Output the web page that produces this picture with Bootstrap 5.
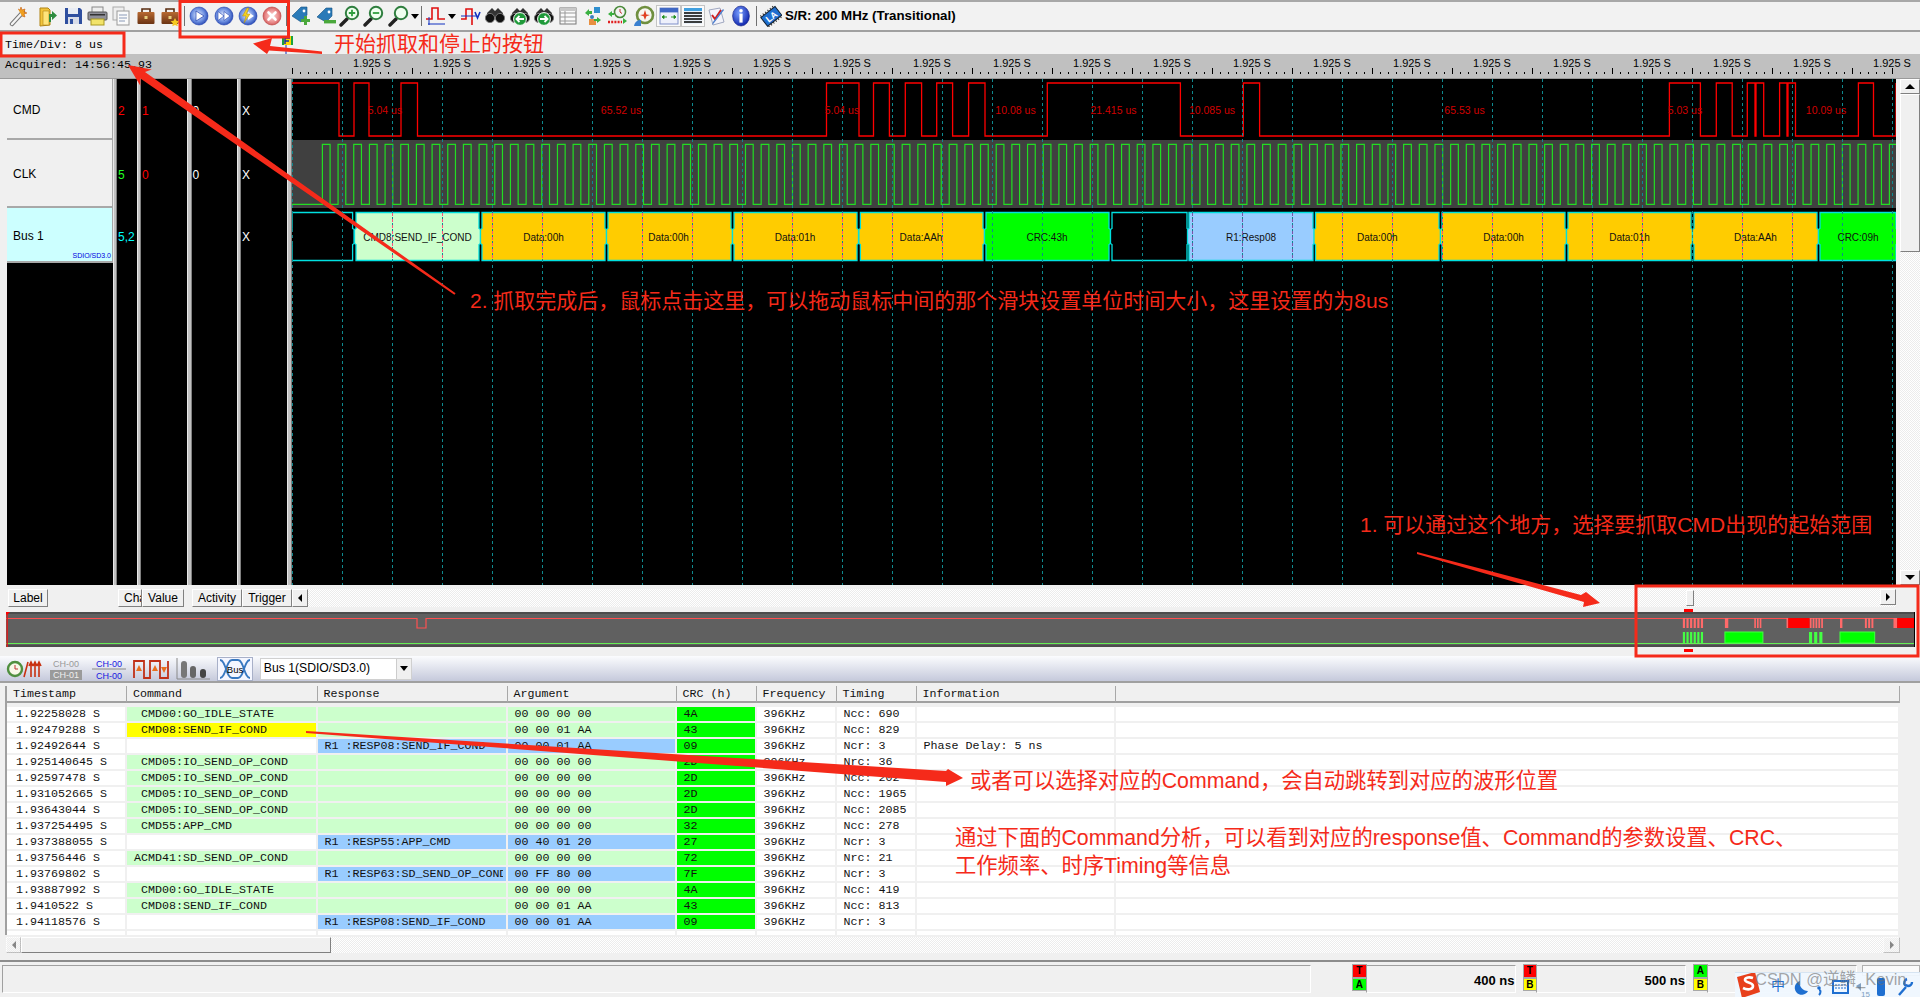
<!DOCTYPE html>
<html lang="zh">
<head>
<meta charset="utf-8">
<title>Logic Analyzer</title>
<link href="https://cdn.jsdelivr.net/npm/bootstrap@5.3.0/dist/css/bootstrap.min.css" rel="stylesheet">
<style>
html,body{margin:0;padding:0;width:1920px;height:997px;overflow:hidden;background:#f0f0f0}
body{font-family:"Liberation Sans","Noto Sans CJK SC",sans-serif;font-size:12px;color:#000;position:relative}
.mono{font-family:"Liberation Mono",monospace;font-size:11.67px}
.defs{position:absolute;width:0;height:0}
.dither{background:repeating-conic-gradient(#fff 0 25%,#ececec 0 50%) 0 0/2px 2px}
/* main toolbar */
.tb-main{height:32px;border-top:2px solid #a8a8a8;border-bottom:2px solid #a0a0a0;padding-left:6px;background:#f2f2f2}
.ic{width:24.3px;height:22px;flex:none;display:flex;align-items:center;justify-content:center}
.ic svg{width:22px;height:22px}
.ic-cap{width:8px;height:22px;flex:none;display:flex;align-items:center;justify-content:center}
.cap{width:0;height:0;border-left:4px solid transparent;border-right:4px solid transparent;border-top:5px solid #000}
.sep{width:1px;height:20px;background:#707070;margin:0 2px;flex:none}
.boxed{outline:1px solid #c4c4c4;outline-offset:-1px;background:#fafafa}
.sr{font-weight:700;font-size:13.3px;margin-left:2px;white-space:nowrap}
.sp6{margin-left:6px}.sp3{margin-left:3px}
/* time row */
.time-row{height:22px;padding-left:5px}
.td-t{padding-top:5px;line-height:17px}
.flag{margin-left:179px;margin-top:4px;width:11px;height:18px;flex:none}
.ruler{height:24px;background:#c0c0c0}
.acq{width:292px;padding-left:5px;padding-top:3px;flex:none}
/* wave */
.wave-row{height:507px;padding-left:7px;background:#f0f0f0;border-top:1px solid #9a9a9a}
.lbl-col{width:106px;background:#000;flex:none}
.lbl{padding-left:6px;background:#f0f0f0;border-bottom:2px solid #a8a8a8;border-right:1px solid #a8a8a8;position:relative}
.r1{height:61px}.r2{height:68px}.r3{height:55px}
.lbl-bus{background:#ccffff}
.proto{position:absolute;right:1px;bottom:1px;font-size:7px;line-height:8px;color:#0000e0}
.split{background:#c0c0c0;border-left:1px solid #e8e8e8;border-right:1px solid #808080;flex:none}
.s4{width:4px}.s5{width:5px}
.val{background:#000;flex:none;padding-left:1px}
.v20{width:20px}.v45{width:45.5px}
.cell{display:flex;align-items:center;padding-top:2px}
.c-red{color:#f00}.c-green{color:#2f2}.c-white{color:#fff}.c-cyan{color:#0ff}
.wave-svg{width:1604px;height:506px;flex:none;background:#000;display:block}
.vbar{width:20px;margin-left:4px;flex:none;background:#fff}
.sb-btn{background:#f0f0f0;border:1px solid;border-color:#fff #808080 #808080 #fff;flex:none;display:flex;align-items:center;justify-content:center}
.vb-btn{width:20px;height:15px}
.tri-u{width:0;height:0;border-left:5px solid transparent;border-right:5px solid transparent;border-bottom:5px solid #000}
.tri-d{width:0;height:0;border-left:5px solid transparent;border-right:5px solid transparent;border-top:5px solid #000}
.tri-r{width:0;height:0;border-top:4px solid transparent;border-bottom:4px solid transparent;border-left:4px solid #000}
.tri-l{width:0;height:0;border-top:4px solid transparent;border-bottom:4px solid transparent;border-right:4px solid #000}
.off{opacity:.45}
.vb-thumb{width:20px;background:#f0f0f0;border:1px solid;border-color:#fff #808080 #808080 #fff}
.vt1{height:158px}.vt2{height:43px}
/* header row */
.hdr-row{height:22px;padding:4px 24px 0 8px}
.hb{height:18px;background:#f0f0f0;border:1px solid;border-color:#fff #808080 #808080 #fff;font-size:12px;line-height:15px;text-align:center;flex:none;padding:0;overflow:hidden;white-space:nowrap}
.hb-l{width:40px;margin-right:70px}.hb-c{width:24px;text-align:left;padding-left:5px}.hb-v{width:42px;margin-right:8px}.hb-a{width:50px}.hb-t{width:50px}.hb-m{width:16px}
.hdr-track{height:18px;position:relative}
.thumb{position:absolute;top:1px;left:1378px;width:8px;height:16px;background:#f0f0f0;border:1px solid;border-color:#fff #808080 #808080 #fff}
.hb-r{position:absolute;top:0;right:0;width:16px;height:16px}
.ov-wrap{height:40px;padding:5px 5px 0 6px}
.ov-svg{display:block;width:1909px;height:35px}
.gap9{height:9px}
/* analysis toolbar */
.tb2{height:27px;background:linear-gradient(#fbfcfe,#c5c9db);border-bottom:2px solid #a0a0a0;padding-left:6px}
.t2i{width:36px;height:24px;margin-right:6.3px;flex:none}
.sel{width:152px;height:22px;margin-left:0;background:#fff;border:1px solid #d0d0d0;font-size:12.2px;padding-left:3px;flex:none}
.sel-b{margin-left:auto;width:15px;height:20px;background:#f0f0f0;border-left:1px solid #ccc}
/* table */
.tbl-wrap{height:252px;padding:3px 0 0 5px}
.tbl-inner{width:1895px;height:249px;overflow:hidden;background:#fff;border-left:2px solid #a0a0a0}
table.an{table-layout:fixed;border-collapse:separate;border-spacing:0;width:1893px;margin:0;--bs-table-bg:transparent;color:#111}
table.an th,table.an td{padding:0 0 0 7px;height:16px;line-height:14px;font-weight:400;white-space:pre;overflow:hidden;border:0;border-right:2px solid #f0f0f0;border-bottom:2px solid #f0f0f0;box-shadow:none;color:#111}
table.an thead th{height:17px;padding-top:2px;line-height:13px;background:#f0f0f0;border-right:1px solid #a8a8a8;border-bottom:2px solid #a0a0a0;padding-left:6px}
table.an thead tr.sp td{height:4px;line-height:0;font-size:0;background:#f0f0f0;border:0;padding:0}
.col-a{width:120px}.col-b{width:190.5px}.col-c{width:190px}.col-d{width:169px}.col-e{width:80px}.col-f{width:80px}.col-g{width:80px}.col-h{width:199.5px}
table.an td.pl{padding-left:9px}
table.an td.g{background:#ccffcc}
table.an td.b{background:#99ccff}
table.an td.y{background:#ffff00}
table.an td.cr{background:#00ff00}
.clip{width:178px;overflow:hidden}
/* h scroll */
.hs{height:16px;margin:2px 20px 0 6px;position:relative}
.hs-l{width:15px;height:16px}
.hs-t{width:310px;height:16px;background:#f0f0f0;border:1px solid;border-color:#fff #808080 #808080 #fff}
.hs-r{position:absolute;right:0;top:0;width:17px;height:16px}
/* status */
.status{height:37px;margin-top:7px;border-top:2px solid #8c8c8c;padding:3px 0 0 2px;position:relative}
.sunk{height:28px;border:1px solid;border-color:#a0a0a0 #fff #fff #a0a0a0;flex:none}
.sk0{width:1309px}
.tag-col{width:12.5px;flex:none;margin-left:42px}
.tag-col.t2{margin-left:8px}
.tg{height:11.5px;width:12.5px;font-size:10px;line-height:11px;font-weight:700;text-align:center;border:0;outline:1px solid #a8a8a8;outline-offset:0}
.tg+.tg{margin-top:2px}
.t-r{background:#f00}.t-g{background:#0f0}.t-y{background:#ff0}
.sv{width:150px;font-size:13px;font-weight:700;text-align:right;padding-top:8px;line-height:14px}
.sv2{width:150px}
.mini{width:58px;height:11px;margin-left:5px;border:1px solid #b0b0b0;background:#fafafa}
.ime{position:absolute;left:1735px;top:972px;width:185px;height:25px;background:rgba(240,248,255,.93);border-top:1px solid #d6e4f2}
.ime-svg{display:block;width:185px;height:25px}
.wm{position:absolute;left:1755px;top:968px;font-size:16.5px;line-height:22px;color:rgba(110,110,110,.62);white-space:nowrap;font-family:"Liberation Sans","Noto Sans CJK SC",sans-serif}
/* annotations */
.anno{position:absolute;left:0;top:0;width:1920px;height:997px;pointer-events:none}
.anno text{font-family:"Liberation Sans","Noto Sans CJK SC",sans-serif;fill:#f52a1a;font-size:21px}
.anno .t21{font-size:21.3px}
</style>
</head>
<body>
<svg class="defs" aria-hidden="true">
<defs>
<radialGradient id="gb" cx=".45" cy=".45" r=".6"><stop offset="0" stop-color="#e8efff"/><stop offset=".6" stop-color="#6d8fe0"/><stop offset="1" stop-color="#1f3fae"/></radialGradient>
<radialGradient id="gr" cx=".5" cy=".5" r=".6"><stop offset="0" stop-color="#ffdcdc"/><stop offset=".6" stop-color="#e98a8a"/><stop offset="1" stop-color="#c24040"/></radialGradient>
<radialGradient id="gi" cx=".4" cy=".35" r=".7"><stop offset="0" stop-color="#7aa0ff"/><stop offset="1" stop-color="#0a1fa8"/></radialGradient>
<linearGradient id="gc" x1="0" y1="0" x2="0" y2="1"><stop offset="0" stop-color="#b86a32"/><stop offset="1" stop-color="#6b3414"/></linearGradient>
<symbol id="mag" viewBox="0 0 22 22"><path d="M8 14 2 20" stroke="#222" stroke-width="3.4" stroke-linecap="round"/><circle cx="13" cy="8" r="6.2" fill="#f0fff0" stroke="#2f7f3f" stroke-width="2"/></symbol>
<symbol id="bino" viewBox="0 0 22 22"><path d="M3 8 8 3l3 3 3-3 5 5-1 6H4z" fill="#333"/><circle cx="6" cy="13" r="4.6" fill="#111" stroke="#777"/><circle cx="16" cy="13" r="4.6" fill="#111" stroke="#777"/></symbol>
<symbol id="case" viewBox="0 0 22 22"><path d="M7 7V4h8v3" fill="none" stroke="#5a2c10" stroke-width="1.6"/><rect x="2.5" y="7" width="17" height="12" rx="1" fill="url(#gc)"/><rect x="9.5" y="11" width="3" height="3" fill="#e8d080"/></symbol>
</defs>
</svg>

<div class="tb-main d-flex align-items-center">
  <span class="ic"><svg viewBox="0 0 22 22"><path d="M5 19 16 7" stroke="#777" stroke-width="4.4" stroke-linecap="round"/><path d="M5 19 16 7" stroke="#f4f4f4" stroke-width="2.4" stroke-linecap="round"/><path d="M11 4l2 1 1-3 1 3 3-1-1 3 3 1-3 1 1 3-3-1" fill="#f0a020" stroke="#c86010" stroke-width=".6"/></svg></span>
  <span class="ic sp6"><svg viewBox="0 0 22 22"><path d="M3 3h8l2 2v15l-10 1z" fill="#f2c43c" stroke="#b08414"/><path d="M6 6h6v14H6z" fill="#ffe47a" stroke="#b08414" stroke-width=".6"/><path d="M12 13V9h3V6l5 4.5-5 4.5v-3h-1v5h-2z" fill="#2e8b3e"/></svg></span>
  <span class="ic"><svg viewBox="0 0 22 22"><path d="M3 3h15l2 2v14H3z" fill="#2f4f9f"/><rect x="6" y="3" width="10" height="6" fill="#e8ecf4"/><rect x="6" y="12" width="11" height="7" fill="#d8dce8"/><rect x="8" y="14" width="3" height="5" fill="#2f4f9f"/></svg></span>
  <span class="ic"><svg viewBox="0 0 22 22"><rect x="6" y="2" width="11" height="6" fill="#eee" stroke="#888"/><rect x="2" y="7" width="19" height="8" rx="1" fill="#8f8f98" stroke="#555"/><rect x="5" y="14" width="13" height="6" fill="#f2e36a" stroke="#a89820"/><rect x="4" y="9" width="15" height="1.5" fill="#333"/></svg></span>
  <span class="ic"><svg viewBox="0 0 22 22"><rect x="3" y="2" width="11" height="13" fill="#eee" stroke="#aaa"/><rect x="7" y="6" width="12" height="14" fill="#fafafa" stroke="#999"/><path d="M9 10h8M9 13h8M9 16h6" stroke="#8a9ab8"/></svg></span>
  <span class="ic"><svg viewBox="0 0 22 22"><use href="#case"/></svg></span>
  <span class="ic"><svg viewBox="0 0 22 22"><use href="#case"/><path d="M16 13l1.4 2.8 3 .4-2.2 2.1.5 3-2.7-1.4-2.7 1.4.5-3-2.2-2.1 3-.4z" fill="#f6c820"/></svg></span>
  <span class="sep"></span>
  <span class="ic"><svg viewBox="0 0 22 22"><circle cx="11" cy="11" r="9" fill="url(#gb)" stroke="#1f3fae" stroke-width=".6"/><path d="M8 6l8 5-8 5z" fill="#fff" stroke="#1f3fae" stroke-width=".7"/></svg></span>
  <span class="ic"><svg viewBox="0 0 22 22"><circle cx="11" cy="11" r="9" fill="url(#gb)" stroke="#1f3fae" stroke-width=".6"/><path d="M5 6.5 11 11l-6 4.5zM11 6.5l6 4.5-6 4.5z" fill="#fff" stroke="#1f3fae" stroke-width=".6"/></svg></span>
  <span class="ic"><svg viewBox="0 0 22 22"><circle cx="11" cy="11" r="9" fill="url(#gb)" stroke="#1f3fae" stroke-width=".6"/><path d="M11 7l6 4-6 4z" fill="#fff"/><path d="M10 3 5.5 11H9l-2 7 6-9H9.5L12 3z" fill="#f4d020" stroke="#a88a10" stroke-width=".5"/></svg></span>
  <span class="ic"><svg viewBox="0 0 22 22"><circle cx="11" cy="11" r="9" fill="url(#gr)" stroke="#b83a3a" stroke-width=".6"/><path d="M7.5 7.5l7 7M14.5 7.5l-7 7" stroke="#fff" stroke-width="2.6" stroke-linecap="round"/></svg></span>
  <span class="sep"></span>
  <span class="ic"><svg viewBox="0 0 22 22"><path d="M2 11 11 2h6v8l-6 7z" fill="#2a7ab8" stroke="#14507f" stroke-width=".6"/><circle cx="14" cy="6" r="1.4" fill="#fff"/><path d="M14 11h3v3h3v3h-3v3h-3v-3h-3v-3h3z" fill="#4aa83c"/></svg></span>
  <span class="ic"><svg viewBox="0 0 22 22"><path d="M2 12 11 3h6v8l-6 6z" fill="#2a7ab8" stroke="#14507f" stroke-width=".6"/><circle cx="14" cy="7" r="1.4" fill="#fff"/><rect x="9" y="15" width="12" height="3.4" fill="#4aa83c"/></svg></span>
  <span class="ic"><svg viewBox="0 0 22 22"><use href="#mag"/><path d="M13 4.8v6.4M9.8 8h6.4" stroke="#2f9f3f" stroke-width="1.8"/></svg></span>
  <span class="ic"><svg viewBox="0 0 22 22"><use href="#mag"/><path d="M9.8 8h6.4" stroke="#2f9f3f" stroke-width="1.8"/></svg></span>
  <span class="ic"><svg viewBox="0 0 22 22"><use href="#mag"/></svg></span>
  <span class="ic-cap"><span class="cap"></span></span>
  <span class="sep"></span>
  <span class="ic"><svg viewBox="0 0 22 22"><path d="M1 14h6V3h6v11h7" fill="none" stroke="#e01010" stroke-width="1.6"/><path d="M4 12v8M3 19h17" stroke="#1030c0"/></svg></span>
  <span class="ic-cap"><span class="cap"></span></span>
  <span class="ic sp3"><svg viewBox="0 0 22 22"><path d="M1 14h5V4h6v16" fill="none" stroke="#e01010" stroke-width="1.6"/><path d="M1 11h15" stroke="#1030c0"/><path d="M15 7l2.5 6L20 7" fill="none" stroke="#1030c0" stroke-width="1.6"/></svg></span>
  <span class="ic"><svg viewBox="0 0 22 22"><use href="#bino"/></svg></span>
  <span class="ic"><svg viewBox="0 0 22 22"><use href="#bino"/><circle cx="11" cy="14" r="6.4" fill="#1f9a3a" stroke="#fff"/><path d="M15 14H8M10.5 11 7.5 14l3 3" fill="none" stroke="#fff" stroke-width="1.8"/></svg></span>
  <span class="ic"><svg viewBox="0 0 22 22"><use href="#bino"/><circle cx="11" cy="14" r="6.4" fill="#1f9a3a" stroke="#fff"/><path d="M7 14h7M11.5 11l3 3-3 3" fill="none" stroke="#fff" stroke-width="1.8"/></svg></span>
  <span class="ic"><svg viewBox="0 0 22 22"><rect x="3" y="3" width="16" height="16" fill="#fafafa" stroke="#777"/><path d="M3 8h16M3 12h16M3 16h16M8 3v16" stroke="#999"/><rect x="3" y="3" width="16" height="3" fill="#c8c8c8"/></svg></span>
  <span class="ic"><svg viewBox="0 0 22 22"><rect x="12" y="2" width="6" height="6" fill="#2f8fcf"/><rect x="7" y="14" width="7" height="6" fill="#e88f40"/><circle cx="10" cy="12" r="2" fill="#3a80c0"/><path d="M3 8l4-4v2h3v3H7v2zM15 12l4 3-4 3v-2h-3v-2h3z" fill="#3ab040"/></svg></span>
  <span class="ic"><svg viewBox="0 0 22 22"><circle cx="14" cy="7" r="5.5" fill="#f4f4f4" stroke="#4a8a3a" stroke-width="1.6"/><path d="M14 4v3l2 1.5" stroke="#c03030" fill="none"/><path d="M2 9l4-3v2h2v2H6v2z" fill="#3ab040"/><path d="M2 17h14" stroke="#e02020" stroke-width="2.4" stroke-dasharray="2 1.2"/><path d="M17 13l4 3-4 3z" fill="#3ab040"/></svg></span>
  <span class="ic sp3"><svg viewBox="0 0 22 22"><circle cx="12" cy="10" r="8" fill="#f6f6f0" stroke="#6f8f3f" stroke-width="2.6"/><path d="M12 5l1.4 4.4L17 10l-3.6 1.2L12 15l-1.4-3.8L7 10l3.6-.6z" fill="#e04020"/><path d="M1 21c1-5 4-6 7-6v6z" fill="#3a80d0"/></svg></span>
  <span class="ic boxed"><svg viewBox="0 0 22 22"><rect x="2" y="3" width="18" height="16" fill="#eef0fb" stroke="#7f8fc8"/><rect x="2" y="3" width="18" height="4.4" fill="#3f68c4"/><path d="M4 12h5M4 12l2-1.6v3.2zM18 12h-5M18 12l-2-1.6v3.2z" stroke="#2c9f2c"/></svg></span>
  <span class="ic boxed"><svg viewBox="0 0 22 22"><rect x="2" y="3" width="18" height="16" fill="#e8f0fa"/><rect x="2" y="3" width="18" height="3" fill="#3f9fdf"/><path d="M2 8h18M2 11h18M2 14h18M2 17h18" stroke="#000" stroke-width="1.7"/></svg></span>
  <span class="ic"><svg viewBox="0 0 22 22"><path d="M3 5l11-2 4 14-11 3z" fill="#f4f4fa" stroke="#a0a8c0"/><path d="M6 10l3 4 6-9" fill="none" stroke="#d02020" stroke-width="2"/><path d="M18 5 8 18l-2 2 1-3L17 4z" fill="#4a7fd0"/></svg></span>
  <span class="ic"><svg viewBox="0 0 22 22"><ellipse cx="11" cy="11" rx="8.4" ry="10" fill="url(#gi)" stroke="#0a1a80" stroke-width=".6"/><circle cx="11" cy="5.8" r="1.8" fill="#fff"/><rect x="9.4" y="8.6" width="3.2" height="9" fill="#fff"/></svg></span>
  <span class="sep"></span>
  <span class="ic"><svg viewBox="0 0 22 22"><g transform="rotate(-38 11 11)"><rect x="2" y="6" width="18" height="11" fill="#1f6fd0" stroke="#123" stroke-width="1"/><path d="M3 6v-2M6 6v-2M9 6v-2M12 6v-2M15 6v-2M18 6v-2M3 19v-2M6 19v-2M9 19v-2M12 19v-2M15 19v-2M18 19v-2" stroke="#333"/><text x="11" y="15" text-anchor="middle" font-size="9" font-weight="700" font-family="Liberation Sans" fill="#fff">LA</text></g></svg></span>
  <span class="sr">S/R: 200 MHz (Transitional)</span>
</div>

<div class="time-row d-flex mono">
  <span class="td-t">Time/Div: 8 us</span>
  <svg class="flag" viewBox="0 0 11 18"><rect x="0" y="0" width="11" height="9" fill="#ffd800"/><rect x="0" y="0" width="2" height="9" fill="#1aa040"/><rect x="9" y="0" width="2" height="9" fill="#1aa040"/><path d="M3 8V2h5M3 5h4" stroke="#0a30b0" stroke-width="1.4" fill="none"/><path d="M4 9v9" stroke="#1030c0"/></svg>
</div>

<div class="ruler d-flex">
  <div class="acq mono">Acquired: 14:56:45.93</div>
  <svg id="ruler" class="flex-grow-1" viewBox="292 54 1628 24" width="1628" height="24"></svg>
</div>

<div class="wave-row d-flex">
  <div class="lbl-col">
    <div class="lbl r1 cell">CMD</div>
    <div class="lbl r2 cell">CLK</div>
    <div class="lbl lbl-bus r3 cell">Bus 1<span class="proto">SDIO/SD3.0</span></div>
  </div>
  <div class="split s4"></div>
  <div class="val v20">
    <div class="r1 cell c-red">2</div><div class="r2 cell c-green">5</div><div class="r3 cell c-cyan">5,2</div>
  </div>
  <div class="split s4"></div>
  <div class="val v45">
    <div class="r1 cell c-red">1</div><div class="r2 cell c-red">0</div><div class="r3"></div>
  </div>
  <div class="split s5"></div>
  <div class="val v45">
    <div class="r1 cell c-white">0</div><div class="r2 cell c-white">0</div><div class="r3"></div>
  </div>
  <div class="split s4"></div>
  <div class="val v45">
    <div class="r1 cell c-white">X</div><div class="r2 cell c-white">X</div><div class="r3 cell c-white">X</div>
  </div>
  <div class="split s5"></div>
  <svg id="wave" class="wave-svg" viewBox="292 79 1604 506"></svg>
  <div class="vbar d-flex flex-column">
    <div class="sb-btn vb-btn"><span class="tri-u"></span></div>
    <div class="vb-thumb vt1"></div>
    <div class="flex-grow-1 dither"></div>
    <div class="sb-btn vb-btn"><span class="tri-d"></span></div>
  </div>
</div>

<div class="hdr-row d-flex">
  <button class="hb hb-l" type="button">Label</button>
  <button class="hb hb-c" type="button">Cha</button>
  <button class="hb hb-v" type="button">Value</button>
  <button class="hb hb-a" type="button">Activity</button>
  <button class="hb hb-t" type="button">Trigger</button>
  <button class="hb hb-m sb-btn" type="button"><span class="tri-l"></span></button>
  <div class="hdr-track flex-grow-1 dither"><span class="thumb"></span><span class="hb-r sb-btn"><span class="tri-r"></span></span></div>
</div>

<div class="ov-wrap"><svg id="ov" class="ov-svg" viewBox="6 612 1909 35"></svg></div>
<div class="gap9"></div>

<div class="tb2 d-flex align-items-center">
  <svg class="t2i" viewBox="0 0 36 24"><circle cx="9" cy="12" r="7" fill="#f8f8e8" stroke="#4f8f3f" stroke-width="2.4"/><path d="M9 8v4h3" stroke="#c03030" fill="none"/><path d="M18 20 22 5M25 20V6M29 20V6M33 20V6M23 9l2-4 2 4M27 9l2-4 2 4M31 9l2-4 2 4" stroke="#c83010" stroke-width="1.6" fill="none"/></svg>
  <svg class="t2i" viewBox="0 0 36 24"><rect x="2" y="13" width="32" height="10" fill="#9a9a9a"/><text x="18" y="10" text-anchor="middle" font-size="9" font-family="Liberation Sans" fill="#999">CH-00</text><text x="18" y="21" text-anchor="middle" font-size="9" font-family="Liberation Sans" fill="#eee">CH-01</text></svg>
  <svg class="t2i" viewBox="0 0 36 24"><path d="M1 12h34" stroke="#888"/><text x="18" y="10" text-anchor="middle" font-size="9" font-family="Liberation Sans" fill="#1818e0">CH-00</text><text x="18" y="22" text-anchor="middle" font-size="9" font-family="Liberation Sans" fill="#1818e0">CH-00</text></svg>
  <svg class="t2i" viewBox="0 0 36 24"><path d="M1 21V4h10v17h6V4h10v17h8V4" fill="none" stroke="#c03018" stroke-width="1.8"/><path d="M6 8l3 6H3zM22 8l3 6h-6zM31 16l3-6h-6z" fill="#e87020"/></svg>
  <svg class="t2i" viewBox="0 0 36 24"><path d="M2 1v21h33" stroke="#888" fill="none"/><rect x="6" y="4" width="6" height="17" rx="3" fill="#777"/><rect x="15" y="9" width="6" height="12" rx="3" fill="#666"/><rect x="25" y="12" width="6" height="9" rx="3" fill="#444"/></svg>
  <svg class="t2i" viewBox="0 0 36 24"><rect x=".5" y=".5" width="35" height="23" fill="#f4f6ff" stroke="#a8b0c8"/><path d="M3 3c6 0 6 18 12 18h6c6 0 6-18 12-18M3 21c6 0 6-18 12-18h6c6 0 6 18 12 18" fill="none" stroke="#3878c0" stroke-width="1.8"/><text x="18" y="16" text-anchor="middle" font-size="9.5" font-family="Liberation Sans" fill="#000">Bus</text></svg>
  <div class="sel d-flex align-items-center">Bus 1(SDIO/SD3.0)<span class="sel-b d-flex align-items-center justify-content-center"><span class="cap"></span></span></div>
</div>

<div class="tbl-wrap">
<div class="tbl-inner">
<table class="an table mono">
<colgroup><col class="col-a"><col class="col-b"><col class="col-c"><col class="col-d"><col class="col-e"><col class="col-f"><col class="col-g"><col class="col-h"><col></colgroup>
<thead>
<tr><th>Timestamp</th><th>Command</th><th>Response</th><th>Argument</th><th>CRC (h)</th><th>Frequency</th><th>Timing</th><th>Information</th><th></th></tr>
<tr class="sp"><td colspan="9"></td></tr>
</thead>
<tbody>
<tr><td class="pl">1.92258028 S</td><td class="g"> CMD00:GO_IDLE_STATE</td><td class="g"></td><td class="g">00 00 00 00</td><td class="cr">4A</td><td>396KHz</td><td>Ncc: 690</td><td></td><td></td></tr>
<tr><td class="pl">1.92479288 S</td><td class="y"> CMD08:SEND_IF_COND</td><td class="g"></td><td class="g">00 00 01 AA</td><td class="cr">43</td><td>396KHz</td><td>Ncc: 829</td><td></td><td></td></tr>
<tr><td class="pl">1.92492644 S</td><td></td><td class="b">R1 :RESP08:SEND_IF_COND</td><td class="b">00 00 01 AA</td><td class="cr">09</td><td>396KHz</td><td>Ncr: 3</td><td>Phase Delay: 5 ns</td><td></td></tr>
<tr><td class="pl">1.925140645 S</td><td class="g"> CMD05:IO_SEND_OP_COND</td><td class="g"></td><td class="g">00 00 00 00</td><td class="cr">2D</td><td>396KHz</td><td>Nrc: 36</td><td></td><td></td></tr>
<tr><td class="pl">1.92597478 S</td><td class="g"> CMD05:IO_SEND_OP_COND</td><td class="g"></td><td class="g">00 00 00 00</td><td class="cr">2D</td><td>396KHz</td><td>Ncc: 202</td><td></td><td></td></tr>
<tr><td class="pl">1.931052665 S</td><td class="g"> CMD05:IO_SEND_OP_COND</td><td class="g"></td><td class="g">00 00 00 00</td><td class="cr">2D</td><td>396KHz</td><td>Ncc: 1965</td><td></td><td></td></tr>
<tr><td class="pl">1.93643044 S</td><td class="g"> CMD05:IO_SEND_OP_COND</td><td class="g"></td><td class="g">00 00 00 00</td><td class="cr">2D</td><td>396KHz</td><td>Ncc: 2085</td><td></td><td></td></tr>
<tr><td class="pl">1.937254495 S</td><td class="g"> CMD55:APP_CMD</td><td class="g"></td><td class="g">00 00 00 00</td><td class="cr">32</td><td>396KHz</td><td>Ncc: 278</td><td></td><td></td></tr>
<tr><td class="pl">1.937388055 S</td><td></td><td class="b">R1 :RESP55:APP_CMD</td><td class="b">00 40 01 20</td><td class="cr">27</td><td>396KHz</td><td>Ncr: 3</td><td></td><td></td></tr>
<tr><td class="pl">1.93756446 S</td><td class="g">ACMD41:SD_SEND_OP_COND</td><td class="g"></td><td class="g">00 00 00 00</td><td class="cr">72</td><td>396KHz</td><td>Nrc: 21</td><td></td><td></td></tr>
<tr><td class="pl">1.93769802 S</td><td></td><td class="b"><div class="clip">R1 :RESP63:SD_SEND_OP_COND</div></td><td class="b">00 FF 80 00</td><td class="cr">7F</td><td>396KHz</td><td>Ncr: 3</td><td></td><td></td></tr>
<tr><td class="pl">1.93887992 S</td><td class="g"> CMD00:GO_IDLE_STATE</td><td class="g"></td><td class="g">00 00 00 00</td><td class="cr">4A</td><td>396KHz</td><td>Ncc: 419</td><td></td><td></td></tr>
<tr><td class="pl">1.9410522 S</td><td class="g"> CMD08:SEND_IF_COND</td><td class="g"></td><td class="g">00 00 01 AA</td><td class="cr">43</td><td>396KHz</td><td>Ncc: 813</td><td></td><td></td></tr>
<tr><td class="pl">1.94118576 S</td><td></td><td class="b">R1 :RESP08:SEND_IF_COND</td><td class="b">00 00 01 AA</td><td class="cr">09</td><td>396KHz</td><td>Ncr: 3</td><td></td><td></td></tr>
<tr><td></td><td></td><td></td><td></td><td></td><td></td><td></td><td></td><td></td></tr>
</tbody>
</table>
</div>
</div>

<div class="hs d-flex dither">
  <div class="sb-btn hs-l off"><span class="tri-l"></span></div>
  <div class="hs-t"></div>
  <div class="sb-btn hs-r off"><span class="tri-r"></span></div>
</div>

<div class="status d-flex">
  <div class="sunk sk0"></div>
  <div class="tag-col"><div class="tg t-r">T</div><div class="tg t-g">A</div></div>
  <div class="sunk sv">400 ns</div>
  <div class="tag-col t2"><div class="tg t-r">T</div><div class="tg t-y">B</div></div>
  <div class="sunk sv">500 ns</div>
  <div class="tag-col t2"><div class="tg t-g">A</div><div class="tg t-y">B</div></div>
  <div class="sunk sv sv2"></div>
  <div class="mini"></div>
</div>

<div class="ime">
<svg class="ime-svg" viewBox="0 0 185 25"><path d="M2 4 20-1l5 20-18 6z" fill="#e8401c"/><path d="M18 5c-3-1-8-1-8 2s8 2 8 6-6 4-10 2" fill="none" stroke="#fff" stroke-width="2.6"/><text x="36" y="17" font-size="14" font-family="Noto Sans CJK SC" fill="#1f6fd0">中</text><path d="M65 8a7 7 0 1 0 8 10 8 8 0 0 1-8-10z" fill="#1f6fd0"/><path d="M84 17c2 0 2 3 0 5" stroke="#1f6fd0" stroke-width="2" fill="none"/><circle cx="84" cy="15" r="1.8" fill="#1f6fd0"/><rect x="98" y="8" width="15" height="12" fill="none" stroke="#1f6fd0" stroke-width="2"/><path d="M100 12h11M100 15h11" stroke="#1f6fd0" stroke-dasharray="2 1"/><path d="M121 13l5-3v8z" fill="#7f9fc0"/><text x="126" y="24" font-size="8" font-family="Liberation Sans" fill="#7f9fc0">15</text><rect x="142" y="5" width="8" height="18" rx="2" fill="#1f6fd0"/><path d="M164 22l7-8M172 6a4 4 0 0 0-2 6l3 1a4 4 0 0 0 4-4" fill="none" stroke="#1f6fd0" stroke-width="2.4"/></svg>
</div>
<div class="wm">CSDN @逆鳞_Kevin</div>

<svg class="anno" viewBox="0 0 1920 997">
  <rect x="1684" y="609" width="9" height="3" fill="#f00"/><rect x="1684" y="649" width="9" height="3" fill="#f00"/>
  <g fill="none" stroke="#f52a1a" stroke-width="3">
    <rect x="180" y="1.5" width="108.5" height="35.5"/>
    <rect x="1" y="33" width="123" height="23"/>
    <rect x="1636" y="586" width="282" height="70"/>
  </g>
  <g fill="#f52a1a">
    <polygon points="253,43.5 272,38 270,46 322,51.5 322,54 269,50.5 267,54"/>
    <polygon points="128,65 151.7,69.4 145,72 455.6,293.2 454.4,294.8 140.4,78.6 140.3,85.8"/>
    <polygon points="1417,552 1581,595 1586,592 1600,603 1583,607 1584,602 1417,554"/>
    <polygon points="306,731 946,771 948,769 963,778 946,786 946,782 306,733"/>
  </g>
  <text x="334" y="51">开始抓取和停止的按钮</text>
  <text x="470" y="308">2. 抓取完成后，鼠标点击这里，可以拖动鼠标中间的那个滑块设置单位时间大小，这里设置的为8us</text>
  <text x="1360" y="532">1. 可以通过这个地方，选择要抓取CMD出现的起始范围</text>
  <text class="t21" x="970" y="788">或者可以选择对应的Command，会自动跳转到对应的波形位置</text>
  <text class="t21" x="955" y="845">通过下面的Command分析，可以看到对应的response值、Command的参数设置、CRC、</text>
  <text class="t21" x="955" y="873">工作频率、时序Timing等信息</text>
</svg>

<script src="https://cdn.jsdelivr.net/npm/bootstrap@5.3.0/dist/js/bootstrap.bundle.min.js"></script>
<script>
(function(){
  var NS='http://www.w3.org/2000/svg';
  function el(p,t,a,txt){var e=document.createElementNS(NS,t);for(var k in a)e.setAttribute(k,a[k]);if(txt)e.textContent=txt;p.appendChild(e);return e;}
  // ruler
  var r=document.getElementById('ruler');
  for(var x=292;x<1900;x+=8){var big=(x-292)%40===0;el(r,'rect',{x:x,y:big?68:72,width:1,height:big?6:2,fill:'#000'});}
  for(var k=0;k<20;k++){el(r,'text',{x:372+80*k,y:67,'text-anchor':'middle','font-size':'11','font-family':'Liberation Sans',fill:'#000'},'1.925 S');}
  // wave
  var w=document.getElementById('wave');
  el(w,'rect',{x:292,y:140,width:1604,height:68,fill:'#404040'});
  // CMD
  var edges=[339,354,369,401,417.5,826.5,859,873.5,889.4,905.3,921.6,936.7,952.6,968.6,985,1047.3,1180.4,1243.3,1259.6,1669.4,1700.4,1716.3,1732.2,1747.3,1755,1756,1763.7,1779.6,1787,1788,1795.5,1858.4,1873.5,1896];
  var hi=true,d='M292 83',yh=83,yl=136;
  edges.forEach(function(x){d+='H'+x;hi=!hi;d+='V'+(hi?yh:yl);});
  el(w,'path',{d:d,fill:'none',stroke:'#f00','stroke-width':1.3});
  // CLK
  var c='M292 204.3H322.4',px=322.4,per=15.67;
  while(px<1896){c+='V144.3H'+Math.min(px+7.7,1896);if(px+7.7<1896){c+='V204.3H'+Math.min(px+per,1896);}px+=per;}
  el(w,'path',{d:c,fill:'none',stroke:'#22dd22','stroke-width':1.2});
  // CMD labels
  [[385,'5.04 us'],[621,'65.52 us'],[842,'5.04 us'],[1015.5,'10.08 us'],[1113.5,'21.415 us'],[1212,'10.085 us'],[1464.5,'65.53 us'],[1685,'5.03 us'],[1826,'10.09 us']].forEach(function(a){
    el(w,'text',{x:a[0],y:114,'text-anchor':'middle','font-size':'10.5','font-family':'Liberation Sans',fill:'#d00000'},a[1]);
  });
  // bus blocks
  var y0=212.5,y1=260.5;
  function block(x,w2,fill,label,cx){
    var r=x+w2;
    var p=[[x,y0],[r,y0],[r,y0+16],[r+1.5,y0+17],[r+1.5,y1-17],[r,y1-16],[r,y1],[x,y1],[x,y1-16],[x-1.5,y1-17],[x-1.5,y0+17],[x,y0+16]].map(function(q){return q.join(',');}).join(' ');
    el(w,'polygon',{points:p,fill:fill,stroke:'#00e0e0','stroke-width':1.3});
    if(label)el(w,'text',{x:cx||(x+w2/2),y:241,'text-anchor':'middle','font-size':'10','font-family':'Liberation Sans',fill:'#111'},label);
  }
  var Y='#ffcc00',G='#00ff00',L='#ccffcc',B='#99ccff';
  var blocks=[[292,60.6,'#000',''],[356,123,L,'CMD8:SEND_IF_COND'],[482,123,Y,'Data:00h'],[608,123,Y,'Data:00h',668.5],[734,123,Y,'Data:01h',795],[860.4,122.6,Y,'Data:AAh',921],[986,123,G,'CRC:43h',1047],[1112,75,'#000',''],[1189,124,B,'R1:Resp08',1251],[1315.5,123.5,Y,'Data:00h'],[1442,123,Y,'Data:00h'],[1568,123,Y,'Data:01h'],[1694,123,Y,'Data:AAh'],[1820,76,G,'CRC:09h',1858]];
  blocks.forEach(function(b){block(b[0],b[1],b[2],b[3],b[4]);});
  // grid
  for(var g=292;g<1896;g+=50){
    el(w,'line',{x1:g+.5,x2:g+.5,y1:79,y2:585,stroke:'#0e8a8f','stroke-width':1,'stroke-dasharray':'3 3'});
    var col=null;
    blocks.forEach(function(b){if(g>=b[0]&&g<b[0]+b[1]){if(b[2]===Y||b[2]===L)col='#ff4f7f';if(b[2]===B)col='#7f4fa8';}});
    if(col)el(w,'line',{x1:g+.5,x2:g+.5,y1:213,y2:260,stroke:col,'stroke-width':1,'stroke-dasharray':'3 3'});
  }
  // overview
  var o=document.getElementById('ov');
  el(o,'rect',{x:6,y:612,width:1909,height:35,fill:'#606060'});
  el(o,'rect',{x:6,y:612,width:1909,height:2,fill:'#4c4c4c'});
  el(o,'rect',{x:6,y:645,width:1909,height:2,fill:'#4c4c4c'});
  el(o,'path',{d:'M6 618.5H417V628H426V618.5H1915',fill:'none',stroke:'#ff5050','stroke-width':1.2});
  el(o,'path',{d:'M6 643.5H1915',fill:'none',stroke:'#66ee55','stroke-width':1.2});
  el(o,'rect',{x:6.5,y:612,width:1.4,height:35,fill:'#e02020'});
  el(o,'path',{d:'M4 612h6l-3 3z',fill:'#f00'});
  function z(v){return 1280+v/2.45;}
  function stripes(a,b,y,h,col,n){var st=(z(b)-z(a))/n;for(var i=0;i<n;i++){el(o,'rect',{x:z(a)+i*st,y:y,width:st*.6,height:h,fill:col});}}
  var LR='#ff6a6a',LG='#44ff44';
  stripes(987,1040,618,10,LR,6);
  el(o,'rect',{x:z(1090),y:618,width:3.4,height:10,fill:LR});
  stripes(1162,1182,618,10,LR,3);
  el(o,'rect',{x:z(1241),y:618,width:1.8,height:10,fill:LR});
  el(o,'rect',{x:z(1245),y:618,width:21.6,height:10,fill:'#f00'});
  stripes(1298,1333,618,10,LR,5);
  el(o,'rect',{x:z(1372),y:618,width:2.4,height:10,fill:LR});
  stripes(1433,1457,618,10,LR,3);
  el(o,'rect',{x:z(1503),y:618,width:3.6,height:10,fill:LR});
  el(o,'rect',{x:z(1512),y:618,width:17.5,height:10,fill:'#f00'});
  stripes(987,1040,632,11,LG,6);
  el(o,'rect',{x:z(1090),y:632,width:38,height:11,fill:'#0f0',stroke:LG});
  stripes(1296,1334,632,11,LG,3);
  el(o,'rect',{x:z(1372),y:632,width:34.7,height:11,fill:'#0f0',stroke:LG});
  el(o,'rect',{x:1914,y:612,width:1,height:35,fill:'#000'});
})();
</script>
</body>
</html>
